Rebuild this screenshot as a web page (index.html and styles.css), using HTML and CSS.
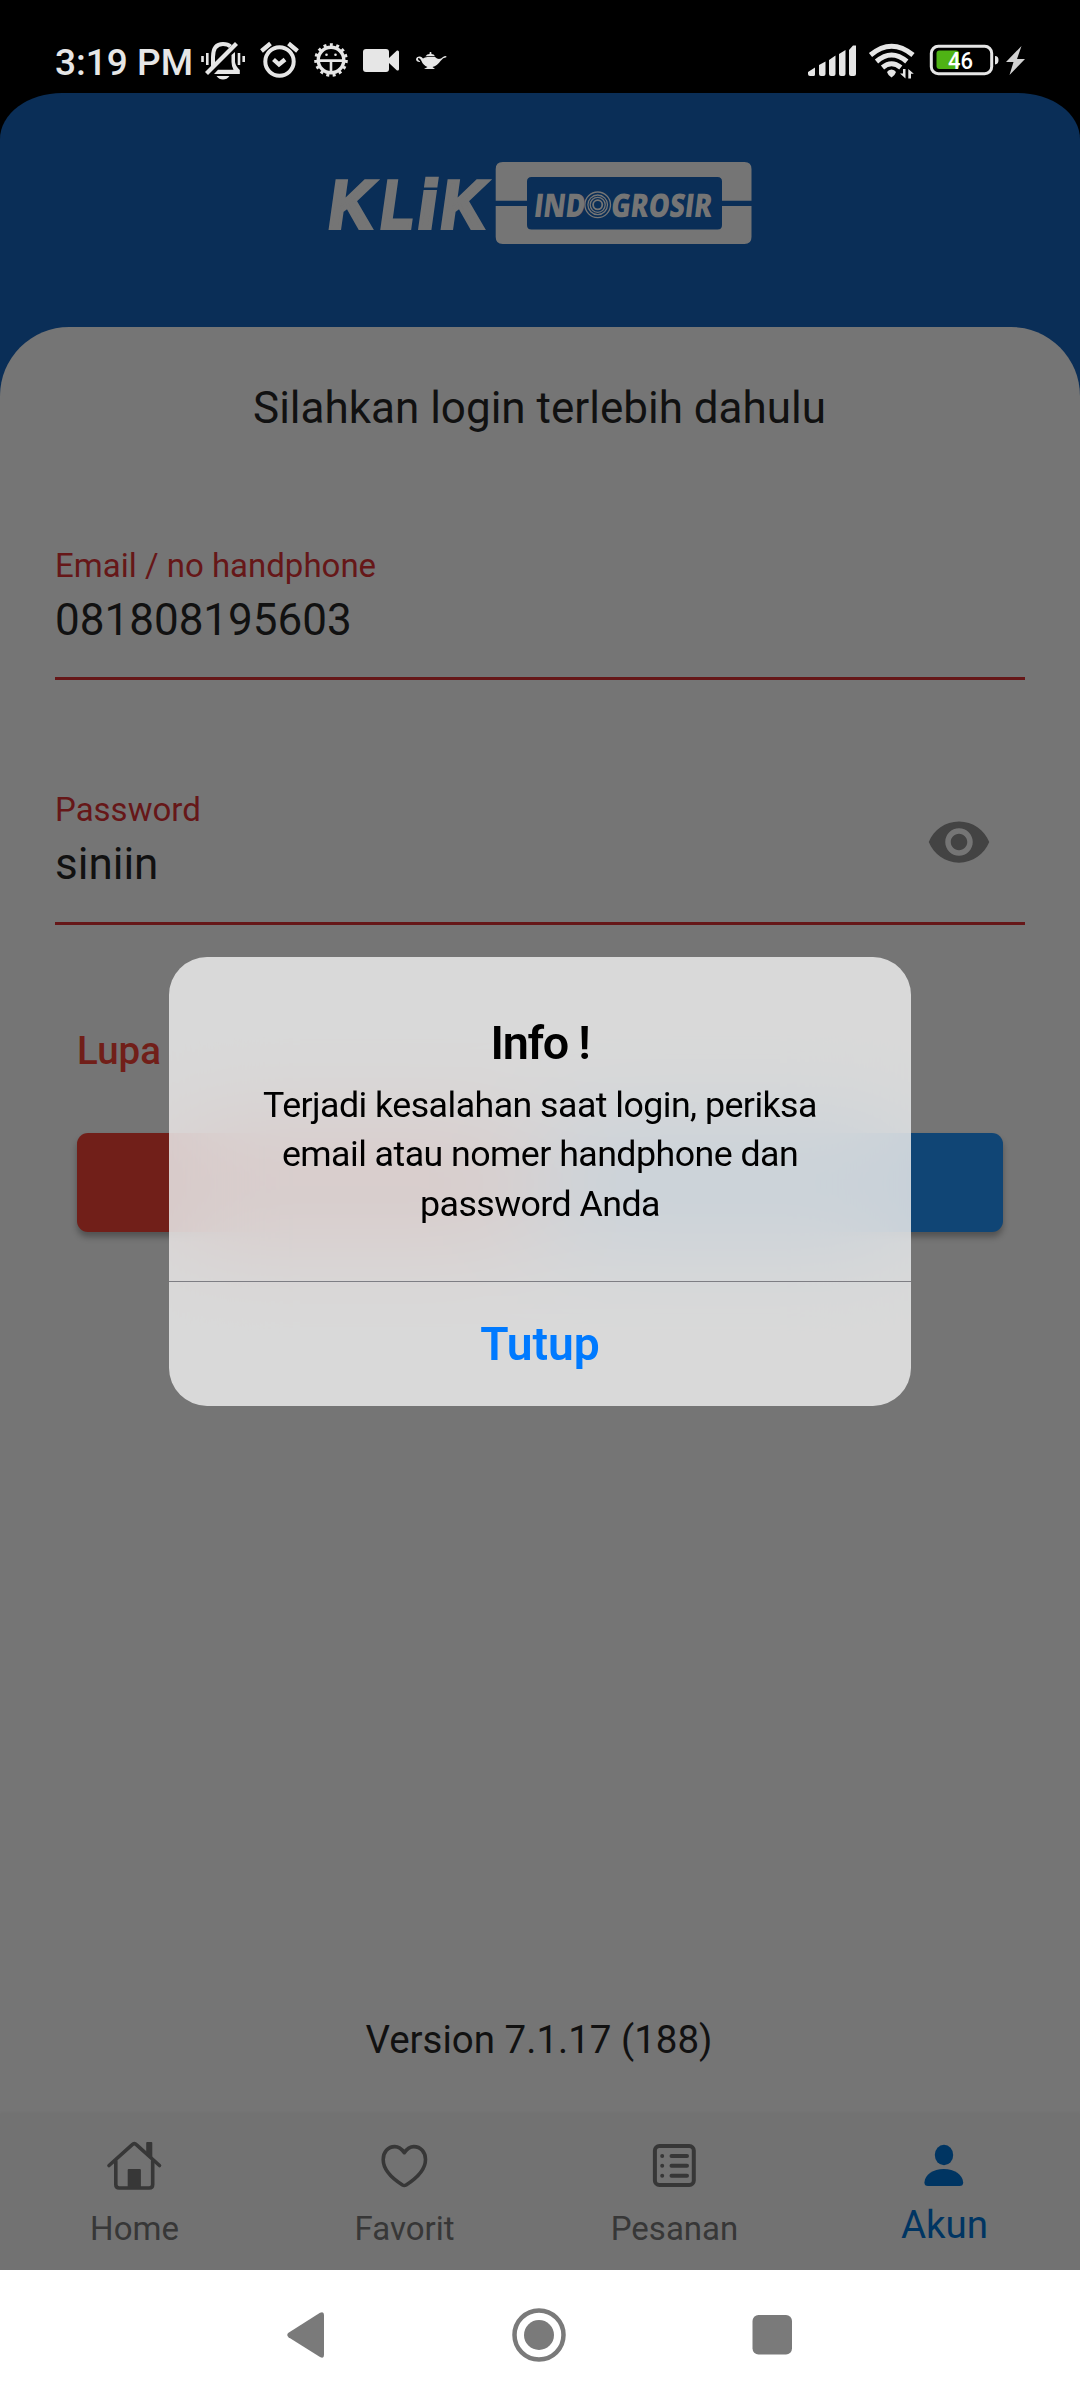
FILE: index.html
```html
<!DOCTYPE html>
<html lang="id">
<head>
<meta charset="utf-8">
<title>Klik Indogrosir</title>
<link rel="stylesheet" href="styles.css">
</head>
<body>
<div class="phone">
  <header class="status">
    <span class="time">3:19 PM</span>
    <svg class="status-left" width="250" height="40" viewBox="200 41 250 40" fill="none" stroke="#e6e6e6" stroke-width="4">
      <path d="M213 66V57Q213 44 223 44Q228 44 230.500 46.500" />
      <path d="M231.500 55L235 52V62Q235.500 66 239.800 70V74H214L218 69.800H233.500Q231.500 66 231.500 62Z" fill="#e6e6e6" stroke="none"/>
      <path d="M236.500 43.500L206.500 73.500" stroke-width="4.200"/>
      <path d="M202.500 56V62M207.300 53V65M239 53V65M243.700 56V62" stroke-width="2.600"/>
      <path d="M216.500 76H229.500Q227 79.500 223 79.500T216.500 76Z" fill="#e6e6e6" stroke="none"/>
      <circle cx="279.500" cy="61.500" r="14.200"/>
      <path d="M273.500 59.500L279 64.500L285 59.500M261.500 51L270.500 43.500M297.500 51L288.500 43.500" stroke-width="4.300"/>
      <circle cx="331" cy="60" r="15" stroke-width="3.600" stroke-dasharray="2.900 3.383"/>
      <circle cx="331" cy="60" r="12.800" stroke-width="3.400"/>
      <path d="M319 60.600H343M331 61V72" stroke-width="2.600"/>
      <g fill="#e6e6e6" stroke="none">
        <circle cx="326.500" cy="54.700" r="1.300"/><circle cx="335.500" cy="54.700" r="1.300"/>
        <rect x="363" y="49" width="26" height="23" rx="3"/>
        <path d="M389 58L397 50.500Q399 50 399 52V69Q399 71 397 70.500L389 63Z"/>
        <path d="M423 58.500Q425 56.800 428 57H435Q439 61 443 57Q444 56 446.300 56V57.200Q443 57.500 440.500 61Q437 66 432.500 67L435 69H424L427.500 67Q423 65 421.500 61Q420 57.600 418 58.200Q417.500 60 420 61.200V62Q416 62 416 59Q416.500 56 420 56.500Q422 57 423 58.500ZM425.500 56.300Q427 54 429.500 54L429.800 52H431.200L431.500 54Q434 54 435 56.300Z"/>
      </g>
    </svg>
    <svg class="status-right" width="220" height="40" viewBox="805 41 220 40">
      <g fill="#e6e6e6">
        <path d="M808 72L815 67.500V74.500Q815 76 813.500 76H810Q808 76 808 74ZM819 65L825.500 61.500V74Q825.500 76 823.500 76H821Q819 76 819 74ZM829 60L835.500 55.500V74Q835.500 76 833.500 76H831Q829 76 829 74ZM839 54L845.500 50V74Q845.500 76 843.500 76H841Q839 76 839 74ZM849 50L853 45.500H856V74Q856 76 854 76H851Q849 76 849 74Z"/>
        <path d="M887 72Q888.500 69.500 891.500 69.500T896 72Q895 75.500 891.500 77.500Q888 75.500 887 72Z"/>
        <path d="M905.500 69V78.500L900 73.500H903V69ZM908.300 78.500V69L913.800 73.700H911V78.500Z"/>
      </g>
      <g fill="none" stroke="#e6e6e6" stroke-width="5">
        <path d="M870.500 55Q891.500 37.500 913 55M876.500 61.500Q891.500 48.500 906.800 61.500M882.500 67.500Q891.500 60 900.800 67.500"/>
        <rect x="931.300" y="46.300" width="60.400" height="27.400" rx="7" stroke-width="3"/>
      </g>
      <path d="M995 56Q998.500 56 998.500 60T995 64.500Z" fill="#e6e6e6"/>
      <rect x="936.500" y="50.500" width="22.500" height="18.500" rx="3" fill="#4fb315"/>
      <text class="battery-text" x="948" y="69" textLength="25" lengthAdjust="spacingAndGlyphs">46</text>
      <path d="M1021.500 46L1006 62H1013.500L1009.500 75L1025 59H1017Z" fill="#d2d2d2"/>
    </svg>
  </header>

  <main class="app">
    <div class="brand">
      <svg width="440" height="84" viewBox="320 161 440 84">
        <g fill="#757575">
          <path d="M495.700 200.800V169Q495.700 162 502.700 162H744.500Q751.500 162 751.500 169V200.800H722V181.500Q722 177 717.500 177H531.500Q527 177 527 181.500V200.800ZM495.700 206V237Q495.700 244 502.700 244H744.500Q751.500 244 751.500 237V206H722V225Q722 229.500 717.500 229.500H531.500Q527 229.500 527 225V206Z"/>
          <g class="logo-klik" transform="translate(0 228.200) skewX(-8)">
            <text x="326.500" y="0" textLength="44.500" lengthAdjust="spacingAndGlyphs">K</text>
            <text x="378.500" y="0" textLength="33" lengthAdjust="spacingAndGlyphs">L</text>
            <text x="415.500" y="0" textLength="19" lengthAdjust="spacingAndGlyphs">i</text>
            <text x="438.500" y="0" textLength="44.500" lengthAdjust="spacingAndGlyphs">K</text>
          </g>
          <g class="logo-indo" transform="translate(0 216.500) skewX(-7)">
            <text x="533" y="0" textLength="51" lengthAdjust="spacingAndGlyphs">IND</text>
            <text x="610" y="0" textLength="101" lengthAdjust="spacingAndGlyphs">GROSIR</text>
          </g>
        </g>
        <g fill="none" stroke="#757575" stroke-width="1.300">
          <circle cx="597.700" cy="204.800" r="12.800"/><circle cx="597.700" cy="204.800" r="9.800"/><circle cx="597.700" cy="204.800" r="7.500"/><circle cx="597.700" cy="204.800" r="4.600" stroke-width="1.800"/>
        </g>
      </svg>
    </div>
    <section class="panel">
      <h1 class="heading">Silahkan login terlebih dahulu</h1>
      <div class="field">
        <div><div class="label">Email / no handphone</div><div class="value">081808195603</div></div>
      </div>
      <div class="field second">
        <div><div class="label">Password</div><div class="value">siniin</div></div>
        <svg class="eye" viewBox="0 0 24 24"><path fill="#434343" d="M12 4.500C7 4.500 2.730 7.610 1 12c1.730 4.390 6 7.500 11 7.500s9.270-3.110 11-7.500c-1.730-4.390-6-7.500-11-7.500zM12 17c-2.760 0-5-2.240-5-5s2.240-5 5-5 5 2.240 5 5-2.240 5-5 5zm0-8c-1.660 0-3 1.340-3 3s1.340 3 3 3 3-1.340 3-3-1.340-3-3-3z"/></svg>
      </div>
      <div class="forgot">Lupa</div>
      <div class="actions"><div class="btn red"></div><div class="btn blue"></div></div>
      <div class="version">Version 7.1.17 (188)</div>
    </section>
    <nav class="tabs">
      <div class="tab">
        <svg width="66" height="66" viewBox="101 2133 66 66" fill="none" stroke="#373737" stroke-width="3.600" stroke-linecap="round" stroke-linejoin="round"><path d="M109 2165.500L132 2144.800Q134.300 2142.600 136.600 2144.800L159.500 2165.500"/><path d="M115.800 2161V2184.500Q115.800 2188 119.300 2188H149.200Q152.700 2188 152.700 2184.500V2161"/><path d="M146.200 2143Q146.200 2142 147.200 2142H151.300Q152.300 2142 152.300 2143V2159L146.200 2153.500Z" fill="#373737" stroke="none"/><rect x="127.700" y="2169" width="13.200" height="20" rx="1" fill="#373737" stroke="none"/></svg>
        <span>Home</span>
      </div>
      <div class="tab">
        <svg width="66" height="66" viewBox="371 2133 66 66" fill="none" stroke="#373737" stroke-width="3.600" stroke-linejoin="round"><path d="M404.300 2152.700C401.500 2148.600 398.500 2146.600 394.800 2146.600C388 2146.600 383.200 2152 383.200 2159.500C383.200 2169 391.500 2178 402.500 2185Q404.300 2186 406.100 2185C417 2178 425.500 2169 425.500 2159.500C425.500 2152 420.700 2146.600 413.800 2146.600C410.200 2146.600 407.100 2148.600 404.300 2152.700Z"/></svg>
        <span>Favorit</span>
      </div>
      <div class="tab">
        <svg width="66" height="66" viewBox="641 2133 66 66" fill="none" stroke="#373737" stroke-width="4" stroke-linecap="round"><rect x="654.900" y="2146" width="38.900" height="39" rx="4.500"/><path d="M671.500 2156H687M671.500 2165.800H687M671.500 2175.700H687M662.200 2156h.01M662.200 2165.800h.01M662.200 2175.700h.01"/></svg>
        <span>Pesanan</span>
      </div>
      <div class="tab active">
        <svg width="66" height="66" viewBox="911 2133 66 66" fill="#003562"><ellipse cx="944" cy="2155" rx="9.200" ry="10.200"/><path d="M924.400 2182.500C925 2174.500 933 2169 943.800 2169S962.500 2174.500 963.200 2182.500Q963.200 2186 959.500 2186H928Q924.400 2186 924.400 2182.500Z"/></svg>
        <span>Akun</span>
      </div>
    </nav>
    <div class="dialog">
      <div class="dialog-content">
        <h2>Info !</h2>
        <p>Terjadi kesalahan saat login, periksa<br>email atau nomer handphone dan<br>password Anda</p>
      </div>
      <div class="dialog-action">Tutup</div>
    </div>
  </main>

  <footer class="sysnav">
    <svg width="506" height="56" viewBox="287 2307 506 56" fill="#7a7a7a"><path d="M288.500 2332.800L320 2312.800Q324 2311 324 2315V2355Q324 2359 320 2357L288.500 2337.200Q286 2335 288.500 2332.800Z"/><circle cx="539" cy="2335" r="24.500" fill="none" stroke="#7a7a7a" stroke-width="4.500"/><circle cx="539" cy="2335" r="15"/><rect x="752.500" y="2315" width="39.500" height="39.500" rx="6"/></svg>
  </footer>
</div>
</body>
</html>
```
FILE: styles.css
```css
* { box-sizing: border-box; margin: 0; }
body { background: #000; font-family: Roboto, "Noto Sans", sans-serif; font-weight: 400; }
.phone { width: 1080px; height: 2400px; display: flex; flex-direction: column; background: #000; }

.status { height: 93px; display: flex; align-items: flex-start; padding: 41px 55px 0; color: #e6e6e6; }
.time { width: 145px; font-size: 37px; line-height: 43px; font-weight: 500; white-space: nowrap; }
.status-right { margin-left: auto; }
.battery-text { font: 500 24px Roboto, sans-serif; fill: #fff; }

.app { position: relative; height: 2177px; display: flex; flex-direction: column; background: #0a2e57; border-radius: 62px 62px 0 0 / 46px 46px 0 0; overflow: hidden; }
.brand { height: 234px; flex: none; display: flex; justify-content: center; align-items: flex-start; padding-top: 68px; }
.logo-klik { font: 700 68px "Liberation Sans", sans-serif; stroke: #757575; stroke-width: 4; }
.logo-indo { font: 800 32.500px "Open Sans", sans-serif; }

.panel { flex: 1; display: flex; flex-direction: column; background: #757575; border-radius: 69px 69px 0 0; padding: 0 55px; color: #111; }
.heading { margin-top: 55px; padding-right: 1px; font-size: 44px; line-height: 52px; font-weight: 400; text-align: center; }
.field { margin-top: 111px; height: 135px; border-bottom: 3px solid #661718; display: flex; justify-content: space-between; }
.second { margin-top: 109px; height: 136px; }
.label { font-size: 33px; line-height: 39px; margin-top: 1px; color: #661718; }
.value { font-size: 44px; line-height: 52px; margin-top: 9px; }
.eye { width: 66px; height: 66px; margin: 20px 33px 0 0; }
.forgot { margin: 103px 0 0 22px; font-size: 38.500px; line-height: 45px; font-weight: 500; color: #711f19; }
.actions { margin: 60px 22px 0; display: grid; grid-template-columns: 1fr 1fr; gap: 22px; }
.btn { height: 99px; border-radius: 11px; box-shadow: 0 5px 6px rgba(0, 0, 0, .3); }
.red { background: #711f19; }
.blue { background: #104575; }
.version { margin-top: auto; padding: 0 2px 51px 0; font-size: 38.500px; line-height: 46px; text-align: center; }

.tabs { height: 156px; flex: none; display: grid; grid-template-columns: repeat(4, 1fr); background: #727272; box-shadow: 0 -1px 3px rgba(0, 0, 0, .04); color: #373737; }
.tab { display: flex; flex-direction: column; align-items: center; padding: 19px 2px 0 0; font-size: 33px; line-height: 40px; }
.tab span { margin: 10px 0 0 1px; }
.tab.active { font-size: 38.500px; color: #003562; }
.tab.active span { margin-top: 6px; }

.dialog { position: absolute; left: 169px; top: 864px; width: 742px; height: 449px; border-radius: 38px; overflow: hidden; display: flex; flex-direction: column; background: rgba(242, 242, 242, .8); backdrop-filter: blur(55px); color: #000; text-align: center; }
.dialog-content { height: 325px; padding-top: 58px; border-bottom: 1px solid #7e7e84; }
.dialog h2 { font-size: 46.750px; line-height: 56px; font-weight: 600; letter-spacing: -1.300px; }
.dialog p { margin-top: 10px; font-size: 35.750px; line-height: 49.400px; letter-spacing: -.550px; }
.dialog-action { flex: 1; display: flex; align-items: center; justify-content: center; font-size: 46.200px; font-weight: 600; color: #007aff; }

.sysnav { height: 130px; background: #fff; display: flex; justify-content: center; align-items: flex-start; padding-top: 37px; }
```
